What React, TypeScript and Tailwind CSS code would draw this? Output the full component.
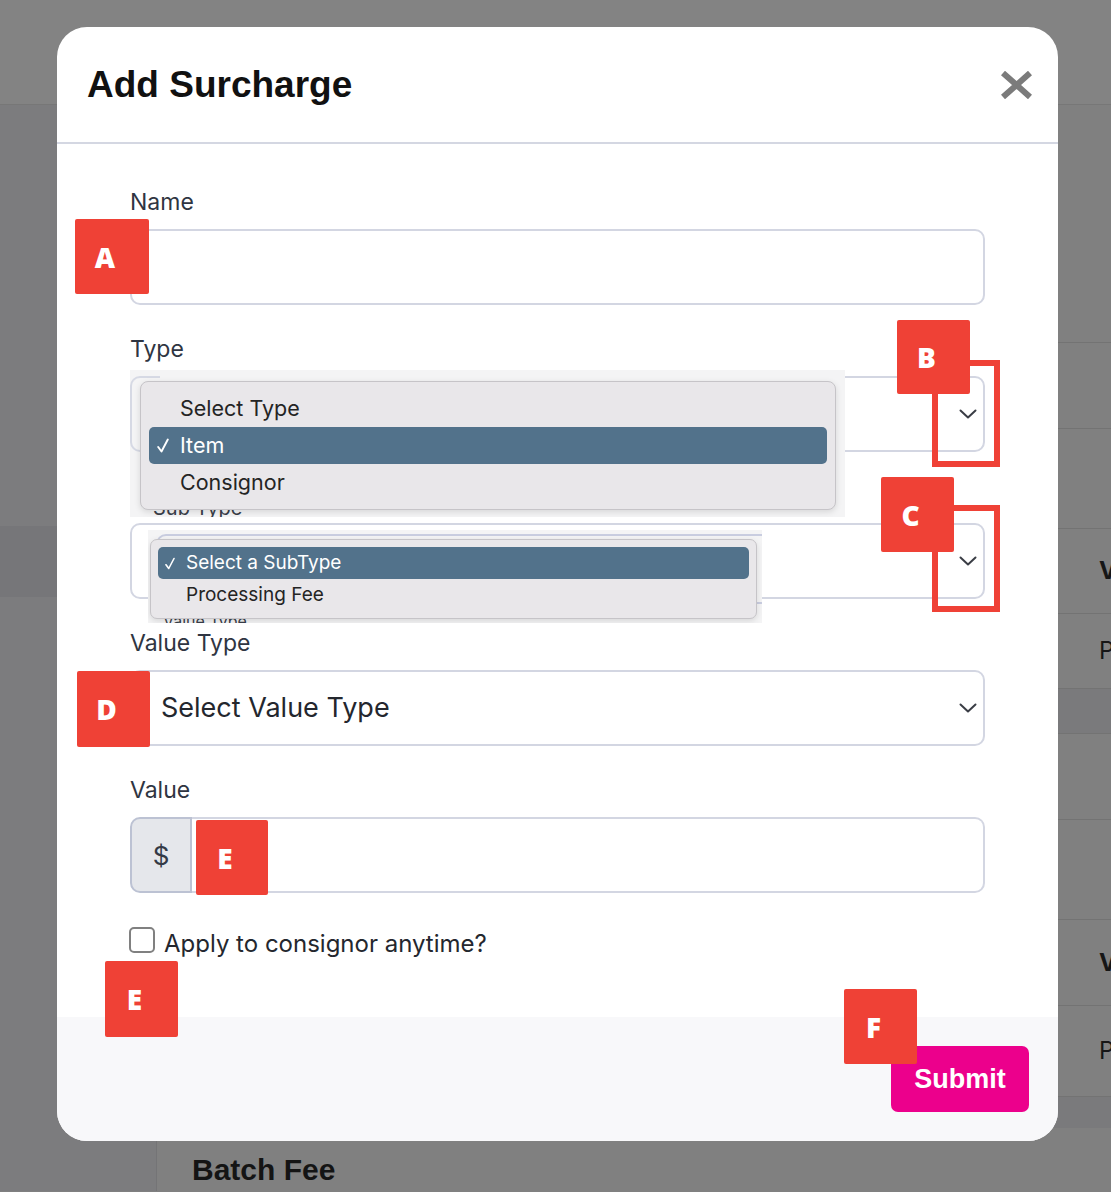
import React from 'react';

function Marker({ letter, className }: { letter: string; className: string }) {
  return (
    <div
      className={`absolute flex items-center justify-center rounded-[2px] bg-[#ef4136] pr-[14px] font-['Open_Sans',sans-serif] text-[28px] font-extrabold leading-none text-white ${className}`}
    >
      {letter}
    </div>
  );
}

function Chevron() {
  return (
    <svg width="18" height="10" viewBox="0 0 18 10" fill="none" stroke="#3a3d45" strokeWidth="2" strokeLinecap="round" strokeLinejoin="round">
      <path d="M1.5 1.5 9 8.5l7.5-7" />
    </svg>
  );
}

function Check({ className }: { className: string }) {
  return (
    <svg className={className} viewBox="0 0 12 15" fill="none" stroke="white" strokeWidth="1.9" strokeLinecap="round" strokeLinejoin="round">
      <path d="M1.2 9 4.5 13.5 10.8 1.5" />
    </svg>
  );
}

function Label({ children }: { children: React.ReactNode }) {
  return <div className="mb-[13px] h-[28px] text-[23px] leading-[28px] text-[#2f3542]">{children}</div>;
}

function SelectBox({ text }: { text?: string }) {
  return (
    <div className="flex h-[76px] items-center justify-between rounded-[10px] border-2 border-[#d3d6e2] bg-white pl-[29px] pr-[6px]">
      <span className="text-[27px] text-[#24272e]">{text}</span>
      <Chevron />
    </div>
  );
}

export default function App() {
  return (
    <div className="relative h-[1192px] w-[1111px] overflow-hidden bg-[#808080] font-['Inter',sans-serif]">
      {/* page behind the overlay */}
      <div className="h-[105px] border-b border-[#777777] bg-[#838383]" />
      <div className="flex h-[1086px]">
        <aside className="w-[157px] shrink-0 border-r border-[#747476] bg-[#7c7c7e] pt-[421px]">
          <div className="h-[71px] bg-[#767679]" />
        </aside>
        <main className="flex-1 pt-[237px] text-[24px] text-[#161616]">
          <div className="h-[86px] border-t border-[#737373]" />
          <div className="h-[100px] border-t border-[#737373]" />
          <div className="flex h-[85px] items-center border-t border-[#737373] pl-[942px] font-bold">Value</div>
          <div className="flex h-[75px] items-center border-t border-[#737373] pl-[942px]">Processing</div>
          <div className="h-[45px] border-t border-[#737373] bg-[#7a7a7c]" />
          <div className="h-[86px] border-t border-[#737373]" />
          <div className="h-[100px] border-t border-[#737373]" />
          <div className="flex h-[86px] items-center border-t border-[#737373] pl-[942px] font-bold">Value</div>
          <div className="flex h-[91px] items-center border-t border-[#737373] pl-[942px]">Processing</div>
          <div className="h-[32px] border-t border-[#737373] bg-[#7a7a7c]" />
          <div className="pl-[35px] pt-[24px] font-['Liberation_Sans',Arial,sans-serif] text-[30px] font-bold leading-[36px] text-[#141414]">
            Batch Fee
          </div>
        </main>
      </div>

      {/* modal */}
      <div className="absolute left-[57px] top-[27px] flex h-[1114px] w-[1001px] flex-col overflow-hidden rounded-[30px] bg-white">
        <header className="flex h-[117px] shrink-0 items-center justify-between border-b-2 border-[#d4d7e2] pl-[30px] pr-[25px]">
          <h1 className="font-['Liberation_Sans',Arial,sans-serif] text-[37px] font-bold text-[#111111]">Add Surcharge</h1>
          <svg width="33" height="28" viewBox="0 0 33 28" fill="none" stroke="#7b7b7b" strokeWidth="6">
            <path d="M3 2 30 26M30 2 3 26" />
          </svg>
        </header>

        <div className="flex flex-1 flex-col px-[73px] pt-[44px]">
          <Label>Name</Label>
          <div className="h-[76px] rounded-[10px] border-2 border-[#d3d6e2] bg-white" />

          <div className="mt-[30px]">
            <Label>Type</Label>
            <SelectBox />
          </div>

          <div className="mt-[30px]">
            <Label>Sub Type</Label>
            <SelectBox />
          </div>

          <div className="mt-[30px]">
            <Label>Value Type</Label>
            <SelectBox text="Select Value Type" />
          </div>

          <div className="mt-[30px]">
            <Label>Value</Label>
            <div className="flex h-[76px]">
              <div className="flex w-[62px] items-center justify-center rounded-l-[10px] border-2 border-[#bcc2d3] bg-[#e5e7eb] text-[26px] text-[#343a46]">
                $
              </div>
              <div className="flex-1 rounded-r-[10px] border-2 border-l-0 border-[#d3d6e2] bg-white" />
            </div>
          </div>

          <div className="ml-[-1px] mt-[34px] flex items-start gap-[9px]">
            <div className="h-[26px] w-[26px] rounded-[5px] border-2 border-[#808080] bg-white" />
            <span className="mt-[4px] text-[24px] leading-[26px] text-[#24272e]">Apply to consignor anytime?</span>
          </div>
        </div>

        <footer className="flex h-[124px] shrink-0 items-start justify-end bg-[#f8f8fa] pr-[29px] pt-[29px]">
          <button className="h-[66px] w-[138px] rounded-[7px] bg-[#ec008c] font-['Liberation_Sans',Arial,sans-serif] text-[27px] font-bold text-white">
            Submit
          </button>
        </footer>
      </div>

      {/* pasted native popup: Type */}
      <div className="absolute left-[130px] top-[370px] h-[147px] w-[715px] overflow-hidden bg-[#f4f4f5]">
        <div className="absolute left-0 top-[6px] h-[76px] w-[30px] rounded-l-[10px] border-2 border-r-0 border-[#d6d9e4]" />
        <div className="absolute left-[23px] top-[126px] text-[20px] leading-[24px] text-[#3a3f4a]">Sub Type</div>
        <div className="absolute left-[10px] top-[11px] w-[696px] rounded-[8px] border border-[#c6c4c8] bg-[#e9e7ea] p-[8px] text-[21.5px] text-[#242424] shadow-[0_2px_6px_rgba(0,0,0,0.12)]">
          <div className="flex h-[37px] items-center pl-[31px]">Select Type</div>
          <div className="relative flex h-[37px] items-center rounded-[5px] bg-[#52728b] pl-[31px] text-white">
            <Check className="absolute left-[8px] top-[11px] h-[15px] w-[12px]" />
            Item
          </div>
          <div className="flex h-[37px] items-center pl-[31px]">Consignor</div>
        </div>
      </div>

      {/* pasted native popup: Sub Type */}
      <div className="absolute left-[148px] top-[530px] h-[93px] w-[614px] overflow-hidden bg-[#f4f4f5]">
        <div className="absolute left-[8px] top-[4px] h-[70px] w-[640px] rounded-[10px] border-2 border-[#c9cde0]" />
        <div className="absolute left-[15px] top-[81px] text-[16px] leading-[20px] text-[#3a3f4a]">Value Type</div>
        <div className="absolute left-[2px] top-[9px] w-[607px] rounded-[7px] border border-[#c6c4c8] bg-[#e9e7ea] p-[7px] text-[19px] text-[#242424] shadow-[0_2px_6px_rgba(0,0,0,0.12)]">
          <div className="relative flex h-[32px] items-center rounded-[5px] bg-[#52728b] pl-[28px] text-white">
            <Check className="absolute left-[7px] top-[10px] h-[13px] w-[10px]" />
            Select a SubType
          </div>
          <div className="flex h-[32px] items-center pl-[28px]">Processing Fee</div>
        </div>
      </div>

      {/* annotation outlines */}
      <div className="absolute left-[932px] top-[360px] h-[107px] w-[68px] border-[6px] border-[#ef4136]" />
      <div className="absolute left-[932px] top-[505px] h-[107px] w-[68px] border-[6px] border-[#ef4136]" />

      {/* annotation labels */}
      <Marker letter="A" className="left-[75px] top-[219px] h-[75px] w-[74px]" />
      <Marker letter="B" className="left-[897px] top-[320px] h-[74px] w-[73px]" />
      <Marker letter="C" className="left-[881px] top-[477px] h-[75px] w-[73px]" />
      <Marker letter="D" className="left-[77px] top-[671px] h-[76px] w-[73px]" />
      <Marker letter="E" className="left-[196px] top-[820px] h-[75px] w-[72px]" />
      <Marker letter="E" className="left-[105px] top-[961px] h-[76px] w-[73px]" />
      <Marker letter="F" className="left-[844px] top-[989px] h-[75px] w-[73px]" />
    </div>
  );
}
